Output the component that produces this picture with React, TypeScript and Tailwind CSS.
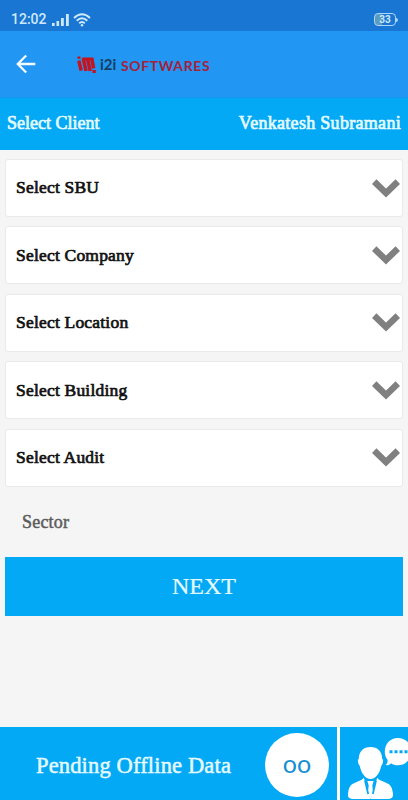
const fields = ["Select SBU", "Select Company", "Select Location", "Select Building", "Select Audit"]

function StatusBar() {
   return (
      <div className="flex h-[31px] items-end justify-between bg-[#1976d2] pr-[10px] pb-[4px] pl-[11px] text-[#cfe9fb]">
         <div className="flex items-center">
            <span className="w-[36px] font-[Roboto,sans-serif] text-[14px] leading-[15px] font-medium whitespace-nowrap">12:02</span>
            <svg className="ml-[4px] h-[14px] w-[19px]" viewBox="0 0 19 14" fill="currentColor">
               <rect x="1" y="10" width="2.6" height="3" />
               <rect x="5.5" y="8" width="2.6" height="5" />
               <rect x="10" y="5" width="2.8" height="8" />
               <rect x="15" y="1" width="2.8" height="12" />
            </svg>
            <svg className="ml-[3px] h-[14px] w-[18px]" viewBox="0 0 18 14" fill="none" stroke="currentColor" strokeWidth="1.9">
               <path d="M1 5Q9 -2.6 17 5M3.7 7.7Q9 2.9 14.3 7.7M6.2 10.2Q9 7.7 11.8 10.2" />
               <circle cx="9" cy="12.2" r="1.2" fill="currentColor" stroke="none" />
            </svg>
         </div>
         <div className="mb-px flex items-center">
            <div className="flex h-[13px] w-[22px] items-center justify-center rounded-[4px] border-[1.5px] border-[#a9d6fa] bg-linear-to-r from-[#5b9cc0] from-33% to-transparent to-33% font-[Roboto,sans-serif] text-[10px] leading-none font-bold">
               33
            </div>
            <span className="h-[4px] w-[2px] rounded-r bg-[#a9d6fa]"></span>
         </div>
      </div>
   )
}

function Toolbar() {
   return (
      <div className="flex h-[66px] items-center bg-[#2196f3] pl-[16px]">
         <svg className="h-[20px] w-[20px]" viewBox="0 0 20 20" fill="none" stroke="#f4fbff" strokeWidth="2.3">
            <path d="M19.3 10H2M10.2 1.5L1.8 10L10.2 18.5" />
         </svg>
         <svg className="mt-[2px] ml-[40px] h-[18px] w-[21px]" viewBox="0 0 21 18">
            <path d="M1.2 .8L4.2 .3L4.7 2.6L1.8 3.1Z" fill="#c4141f" />
            <path d="M2.8 4.6L5.2 14.6M7.2 2.2L10 15M11.4 2.2L14.2 15M15.6 2.2L17.7 12.4" fill="none" stroke="#c4141f" strokeWidth="3.5" />
            <path d="M6.5 3H17.3M16.4 15.4H19.8" fill="none" stroke="#c4141f" strokeWidth="3" />
         </svg>
         <span className="ml-[3px] w-[21px] font-[Lato,sans-serif] text-[15px] leading-none font-bold text-[#173e60]">i2i</span>
         <span className="mt-[3px] font-[Lato,sans-serif] text-[14px] leading-none font-bold tracking-[0.6px] text-[#a92039]">SOFTWARES</span>
      </div>
   )
}

function SelectField({ label }: { label: string }) {
   return (
      <button className="flex h-[58px] w-full items-center justify-between rounded-[3px] border border-[#eaeaea] bg-white pr-[2px] pb-px pl-[10px]">
         <span className="text-[17.5px] tracking-[0.2px] text-[#111] [-webkit-text-stroke:0.7px_#111]">{label}</span>
         <svg className="mt-px h-[19px] w-[28px]" viewBox="0 0 28 19" fill="none" stroke="#808080" strokeWidth="6.4">
            <path d="M2.2 2.6L14 14L25.8 2.6" />
         </svg>
      </button>
   )
}

function SupportIcon() {
   return (
      <svg className="h-[73px] w-[68px]" viewBox="340 727 68 73" fill="#fff">
         <path d="M370.5 747C377.8 747 382.3 751.8 382.2 759C383.8 759.2 383.2 763.8 381.3 765.8C379.6 773.8 375.5 779 370.5 779C365.5 779 361.4 773.8 359.7 765.8C357.8 763.8 357.2 759.2 358.8 759C358.7 751.8 363.2 747 370.5 747Z" />
         <path d="M363.8 777.8L370.4 799H352C347.6 798.2 347.6 795.6 348.3 792C349.2 785.6 351.7 784.2 355.5 782.5C359.8 780.8 362.3 780 363.8 777.8ZM377.2 777.8L370.6 799H389C393.4 798.2 393.4 795.6 392.7 792C391.8 785.6 389.3 784.2 385.5 782.5C381.2 780.8 378.7 780 377.2 777.8Z" />
         <path d="M367.4 781H373.6L372.3 785.5L373.2 793L370.5 799L367.8 793L368.7 785.5Z" />
         <path d="M365 780.5L368.2 794M376 780.5L372.8 794" fill="none" stroke="#03a9f4" strokeWidth="1.8" />
         <path d="M398 738C405.6 738 411.5 743.8 411.5 751.5C411.5 759.2 405.6 765.3 398 765.3C395.1 765.3 393 764.6 391.1 763.2C389.4 765 387.5 765.5 385.4 765.1C387.3 763.7 387.8 761.9 387.5 759.8C385.7 757.4 384.8 754.7 384.8 751.5C384.8 743.8 390.4 738 398 738Z" />
         <path d="M389.5 751.8H408" fill="none" stroke="#03a9f4" strokeWidth="3" strokeDasharray="3 2" />
      </svg>
   )
}

function App() {
   return (
      <div className="flex h-[800px] w-[408px] flex-col overflow-hidden bg-[#f5f5f5] font-['Liberation_Serif',serif]">
         <StatusBar />
         <Toolbar />
         <div className="flex h-[53px] items-center justify-between border-t border-[#1598ec] bg-[#03a9f4] pr-[7px] pb-[2px] pl-[7px] text-[18px] text-[#e5faff] [-webkit-text-stroke:0.7px_#e5faff]">
            <h2>Select Client</h2>
            <span className="tracking-[0.3px]">Venkatesh Subramani</span>
         </div>
         <main className="flex-1 px-[5px] pt-[9px]">
            <div className="flex flex-col gap-[9.4px]">
               {
                  fields.map((label) => (
                     <SelectField key={label} label={label} />
                  ))
               }
            </div>
            <p className="mt-[23px] pl-[17px] text-[18px] leading-[24px] tracking-[0.2px] text-[#5c5c5c] [-webkit-text-stroke:0.5px_#5c5c5c]">Sector</p>
            <button className="mt-[23px] flex h-[59px] w-full items-center justify-center bg-[#03a9f4] text-[24px] text-[#e5faff] [-webkit-text-stroke:0.2px_#e5faff]">
               NEXT
            </button>
         </main>
         <footer className="flex h-[73px] bg-[#03a9f4]">
            <div className="flex w-[337px] items-center justify-between pr-[8px] pl-[36px]">
               <span className="mt-[4px] text-[22.5px] tracking-[0.15px] whitespace-nowrap text-[#e5faff] [-webkit-text-stroke:0.5px_#e5faff]">Pending Offline Data</span>
               <span className="mt-[3px] flex h-[64px] w-[64px] items-center justify-center rounded-full bg-white pb-[3px] font-[Lato,sans-serif] text-[25px] text-[#168fd2]">oo</span>
            </div>
            <div className="w-[3px] bg-white"></div>
            <SupportIcon />
         </footer>
      </div>
   )
}

export default App
